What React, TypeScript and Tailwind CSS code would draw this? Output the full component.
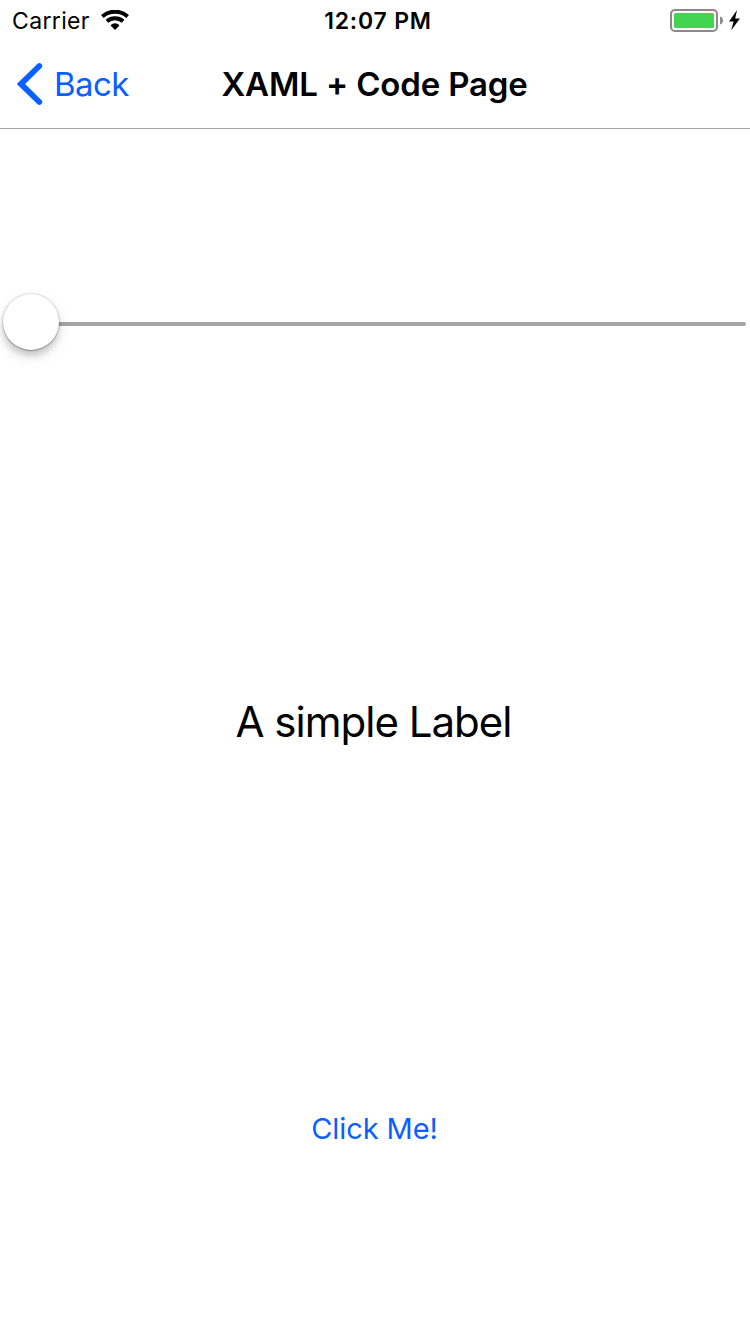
import React from "react";

function WifiIcon() {
  return (
    <svg className="block h-[20px] w-[28px] shrink-0" viewBox="0 0 28 20" fill="none">
      <path d="M1.4 6.4C8.4 0.1 19.6 0.1 26.6 6.4" stroke="#000" strokeWidth="4" />
      <path d="M5.9 11.2C10.5 7.2 17.5 7.2 22.1 11.2" stroke="#000" strokeWidth="4" />
      <path d="M14 20L9.6 15.5C12 12.5 16 12.5 18.4 15.5Z" fill="#000" />
    </svg>
  );
}

function BatteryIcon() {
  return (
    <svg className="block h-[24px] w-[72px] shrink-0" viewBox="0 0 72 24">
      <rect x="1" y="2" width="46" height="21" rx="4" fill="none" stroke="#8a8a8d" strokeWidth="2" />
      <rect x="4" y="5" width="40" height="15" rx="1.5" fill="#43d551" />
      <path d="M50 8.5C52 9 53 10.5 53 12.5C53 14.5 52 16 50 16.5Z" fill="#8a8a8d" />
      <path d="M67 2L59 13.6H63.6L61.2 22.2L70 10.4H65.2Z" fill="#000" />
    </svg>
  );
}

function StatusBar() {
  return (
    <div className="grid h-10 grid-cols-[1fr_auto_1fr] items-center text-black">
      <div className="flex items-center gap-[12px] pl-[12px]">
        <span className="w-[77px] whitespace-nowrap pt-[2px] text-[23px] leading-[38px] tracking-[0.35px]">Carrier</span>
        <WifiIcon />
      </div>
      <span className="pl-[6px] pt-[2px] text-[23px] font-semibold leading-[38px] tracking-[0.8px]">12:07 PM</span>
      <div className="flex justify-end pr-[8px]">
        <BatteryIcon />
      </div>
    </div>
  );
}

function NavigationBar() {
  return (
    <header className="grid h-[89px] grid-cols-[221.5px_308px_1fr] items-center border-b border-[#a5a5a8]">
      <button className="flex items-center pl-[17px] text-[#0a60ff]">
        <svg className="h-[44px] w-[26px]" viewBox="0 0 26 44" fill="none">
          <path d="M22.3 4L4 22L22.3 40" stroke="currentColor" strokeWidth="5.8" strokeLinecap="round" />
        </svg>
        <span className="pl-[11px] text-[33px] leading-[40px] tracking-[-0.6px]">Back</span>
      </button>
      <h1 className="whitespace-nowrap text-[33px] font-semibold leading-[40px] tracking-[-0.15px]">XAML + Code Page</h1>
    </header>
  );
}

function Slider() {
  return (
    <div className="flex h-[58px] items-center pl-[3px] pr-[4px]">
      <div className="z-10 mb-[4px] size-[56px] shrink-0 rounded-full bg-white shadow-[0_0_1px_1px_rgba(0,0,0,0.12),0_1px_1px_rgba(0,0,0,0.2),0_6px_6px_rgba(0,0,0,0.16),0_6px_16px_rgba(0,0,0,0.09)]" />
      <div className="h-[4px] flex-1 rounded-r-full bg-[#a5a5a5]" />
    </div>
  );
}

export default function App() {
  return (
    <div className="flex h-[1334px] w-[750px] flex-col overflow-hidden bg-white font-['Inter',sans-serif]">
      <StatusBar />
      <NavigationBar />
      <main className="flex flex-1 flex-col pt-[166px]">
        <Slider />
        <p className="mt-[343px] pr-[3px] text-center text-[42px] leading-[52px] tracking-[-0.98px] text-black">A simple Label</p>
        <button className="mt-[359px] self-center pr-[1px] text-[29px] leading-[44px] tracking-[-0.1px] text-[#0a60ff]">Click Me!</button>
      </main>
    </div>
  );
}
